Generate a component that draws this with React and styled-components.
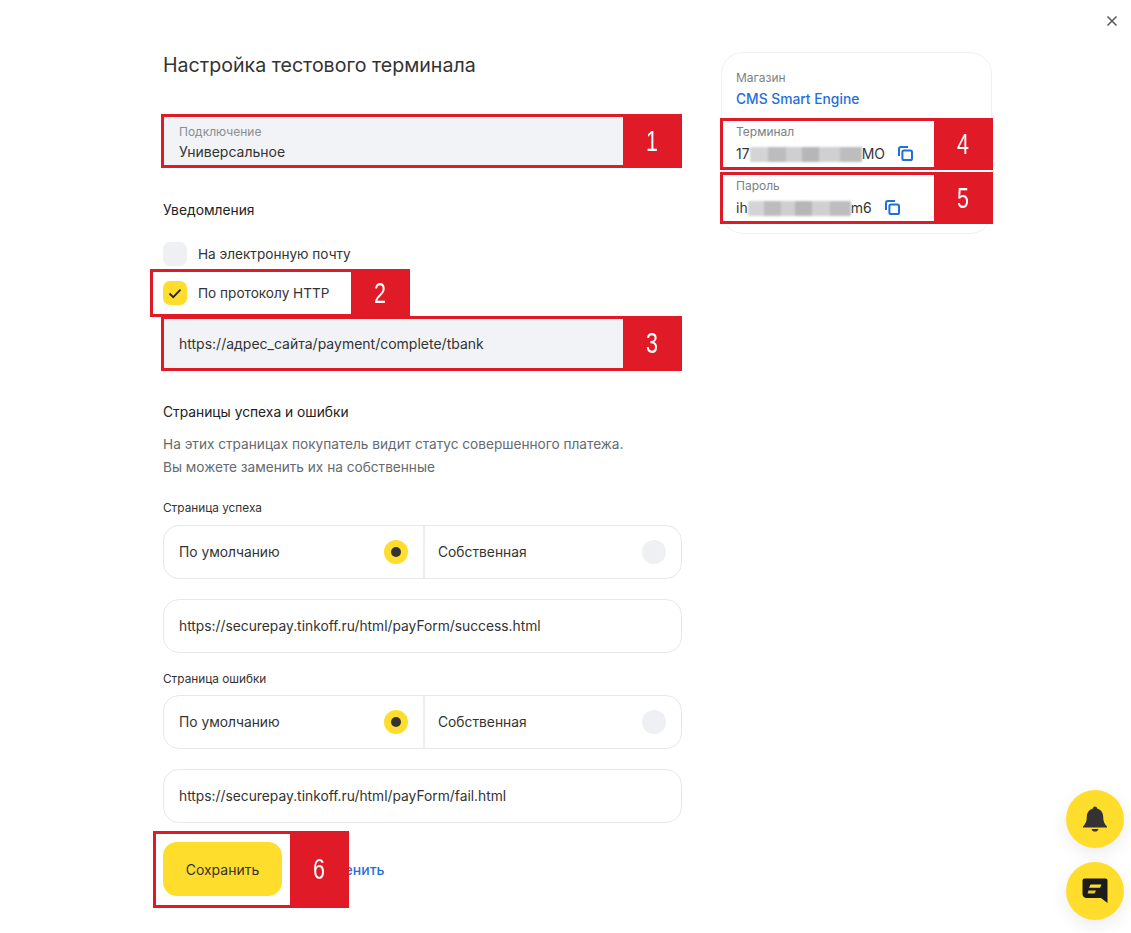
import React from "react"
import styled, { createGlobalStyle } from "styled-components"

const Global = createGlobalStyle`
  html, body {
    margin: 0;
    background: #fff;
  }
  * {
    box-sizing: border-box;
  }
`

const RED = "#e01a27"

const Page = styled.div`
  position: relative;
  width: 1131px;
  height: 933px;
  overflow: hidden;
  display: flex;
  gap: 39px;
  padding-left: 163px;
  font-family: Inter, "Liberation Sans", sans-serif;
  color: #333;
`

const Main = styled.main`
  width: 519px;
  padding-top: 51px;
  display: flex;
  flex-direction: column;
`

const Title = styled.h1`
  margin: 0 0 37px;
  font-size: 19.6px;
  line-height: 28px;
  font-weight: 400;
  color: #333;
`

const Heading = styled.h2`
  margin: ${props => props.$top}px 0 0;
  font-size: 13.8px;
  line-height: 20px;
  font-weight: 400;
  color: #222;
`

const Annotated = styled.div`
  position: relative;
`

/* red frames and numbered blocks lying over the screenshot */
const Frame = styled.div`
  position: absolute;
  top: ${props => props.$top ?? -2}px;
  bottom: ${props => props.$bottom ?? -2}px;
  left: ${props => props.$left ?? -2}px;
  right: ${props => props.$right ?? 0}px;
  border: 3px solid ${RED};
  pointer-events: none;
`

const Mark = styled.div`
  position: absolute;
  top: -3px;
  bottom: -3px;
  right: -3px;
  width: ${props => props.$width ?? 59}px;
  background: ${RED};
  color: #fff;
  display: flex;
  align-items: center;
  justify-content: center;
  font-family: "Liberation Sans", sans-serif;
  font-size: 29px;
`

const Digit = styled.span`
  display: inline-block;
  transform: scaleX(0.74);
`

const FilledField = styled.div`
  height: ${props => props.$height ?? 51}px;
  padding: 0 16px;
  background: #f1f3f6;
  border-radius: 4px;
  display: flex;
  flex-direction: column;
  justify-content: center;
`

const FieldLabel = styled.div`
  margin: 4px 0 2px;
  font-size: 12px;
  line-height: 16px;
  color: #8a8d92;
`

const FieldValue = styled.div`
  font-size: 14px;
  line-height: 20px;
  color: #333;
`

const Checks = styled.div`
  margin-top: 22px;
  display: flex;
  flex-direction: column;
  gap: 15px;
`

const CheckRow = styled.label`
  display: flex;
  align-items: center;
  gap: 11px;
  height: 24px;
  font-size: 13.6px;
  color: #333;
`

const Box = styled.span`
  width: 24px;
  height: 24px;
  border-radius: 7px;
  background: ${props => (props.$on ? "#ffdd2d" : "#eef0f3")};
  display: flex;
  align-items: center;
  justify-content: center;
`

const UrlBlock = styled(Annotated)`
  margin-top: 13px;
`

const Description = styled.p`
  margin: 11px 0 0;
  font-size: 13.65px;
  line-height: 23px;
  color: #666a70;
`

const SmallLabel = styled.div`
  margin-top: ${props => props.$top}px;
  margin-bottom: ${props => props.$bottom}px;
  font-size: 11.8px;
  line-height: 16px;
  color: #333;
`

const Segmented = styled.div`
  height: 54px;
  display: grid;
  grid-template-columns: 259px 1fr;
  border: 1px solid #e6e8eb;
  border-radius: 16px;
`

const Segment = styled.div`
  display: flex;
  align-items: center;
  justify-content: space-between;
  padding: 0 15px;
  font-size: 13.8px;
  color: #333;
  & + & {
    padding-left: 13px;
    border-left: 2px solid #eceef1;
  }
`

const Radio = styled.span`
  width: 24px;
  height: 24px;
  border-radius: 50%;
  background: ${props => (props.$on ? "#ffdd2d" : "#eef0f3")};
  display: flex;
  align-items: center;
  justify-content: center;
  &::after {
    content: "";
    display: ${props => (props.$on ? "block" : "none")};
    width: 10px;
    height: 10px;
    border-radius: 50%;
    background: #333;
  }
`

const UrlInput = styled.div`
  margin-top: 20px;
  height: 54px;
  padding: 0 15px;
  border: 1px solid #e6e8eb;
  border-radius: 16px;
  display: flex;
  align-items: center;
  font-size: 13.8px;
  color: #333;
`

const Actions = styled(Annotated)`
  margin-top: 19px;
  display: flex;
  align-items: center;
  gap: 34px;
`

const SaveButton = styled.button`
  width: 119px;
  height: 54px;
  border: 0;
  border-radius: 14px;
  background: #ffdd2d;
  font: inherit;
  font-size: 14px;
  color: #333;
`

const TextLink = styled.a`
  font-size: 14px;
  font-weight: 500;
  color: #1f6fdc;
`

const Side = styled.aside`
  width: 271px;
  height: 182px;
  margin-top: 52px;
  padding: 16px 15px 0 14px;
  border: 1px solid #eef0f3;
  border-radius: 22px;
`

const Info = styled(Annotated)`
  height: 54px;
`

const InfoLabel = styled.div`
  font-size: 12px;
  line-height: 18px;
  color: #7c7f85;
`

const InfoValue = styled.div`
  margin-top: 3px;
  display: flex;
  align-items: center;
  font-size: 14px;
  line-height: 20px;
  color: #333;
`

const ShopLink = styled.a`
  display: block;
  margin-top: 2px;
  font-size: 13.8px;
  line-height: 20px;
  font-weight: 500;
  color: #1f6fdc;
`

const Redacted = styled.span`
  display: inline-block;
  width: ${props => props.$width}px;
  height: 15px;
  background: linear-gradient(
    90deg,
    #d4d4d6 0 16%,
    #bcbcbe 16% 32%,
    #cfcfd1 32% 46%,
    #b6b6b8 46% 62%,
    #d0d0d2 62% 80%,
    #bdbdbf 80% 100%
  );
  filter: blur(1px);
`

const CopyButton = styled.span`
  display: flex;
  margin: -2px 0 0 13px;
  color: #1f6fdc;
`

const CloseButton = styled.button`
  position: absolute;
  top: 14px;
  right: 12px;
  width: 14px;
  height: 14px;
  padding: 0;
  border: 0;
  background: none;
  display: flex;
  color: #55585c;
`

const Floating = styled.div`
  position: absolute;
  right: 7px;
  bottom: 13px;
  display: flex;
  flex-direction: column;
  gap: 14px;
`

const Fab = styled.button`
  width: 58px;
  height: 58px;
  padding: 0;
  border: 0;
  border-radius: 50%;
  background: #ffdd2d;
  box-shadow: 0 6px 18px rgba(0, 0, 0, 0.08);
  display: flex;
  align-items: center;
  justify-content: center;
`

const CheckIcon = () => (
  <svg width="14" height="11" viewBox="0 0 14 11" fill="none">
    <path d="M1.5 5.5 5.2 9.2 12.5 1.6" stroke="#222" strokeWidth="1.8" />
  </svg>
)

const CopyIcon = () => (
  <svg width="15" height="15" viewBox="0 0 15 15" fill="none" stroke="currentColor" strokeWidth="2">
    <path d="M1 10V3a2 2 0 0 1 2-2h7" />
    <rect x="4.4" y="4.4" width="9.6" height="9.6" rx="1.6" />
  </svg>
)

const CloseIcon = () => (
  <svg width="14" height="14" viewBox="0 0 14 14" fill="none" stroke="currentColor" strokeWidth="1.5">
    <path d="M2.5 2.500l9 9M11.500 2.500l-9 9" />
  </svg>
)

const BellIcon = () => (
  <svg width="26" height="28" viewBox="0 0 26 28" fill="#333">
    <path d="M13 1.500c1.200 0 2 .8 2.100 1.900 3.900 1 6.100 4.300 6.100 8.300 0 4.300 1.100 6.900 3.800 9.800v1H1v-1c2.700-2.900 3.800-5.500 3.800-9.800 0-4 2.200-7.300 6.100-8.300.1-1.100.9-1.900 2.100-1.900z" />
    <path d="M9.500 24h7c-.4 1.600-1.800 2.600-3.500 2.600S9.900 25.600 9.500 24z" />
  </svg>
)

const ChatIcon = () => (
  <svg width="28" height="28" viewBox="0 0 28 28">
    <path d="M3.500 1.500h21a2 2 0 0 1 2 2v22.500l-6.500-5H6a4 4 0 0 1-4.500-4V3.500a2 2 0 0 1 2-2z" fill="#1c1c1c" />
    <path d="M9.500 7.500h11l-1.500 3.200H8z" fill="#ffdd2d" />
    <path d="M7.500 13.500h7.500l-1.400 3H6.500z" fill="#e6c63a" />
  </svg>
)

const Choice = () => (
  <Segmented>
    <Segment>
      По умолчанию
      <Radio $on />
    </Segment>
    <Segment>
      Собственная
      <Radio />
    </Segment>
  </Segmented>
)

const App = () => (
  <Page>
    <Global />
    <Main>
      <Title>Настройка тестового терминала</Title>

      <Annotated>
        <FilledField $height={50}>
          <FieldLabel>Подключение</FieldLabel>
          <FieldValue>Универсальное</FieldValue>
        </FilledField>
        <Frame>
          <Mark>
            <Digit>1</Digit>
          </Mark>
        </Frame>
      </Annotated>

      <Heading $top={34}>Уведомления</Heading>
      <Checks>
        <CheckRow>
          <Box />
          На электронную почту
        </CheckRow>
        <Annotated>
          <CheckRow>
            <Box $on>
              <CheckIcon />
            </Box>
            По протоколу HTTP
          </CheckRow>
          <Frame $top={-12} $bottom={-12} $left={-13} $right={272}>
            <Mark>
              <Digit>2</Digit>
            </Mark>
          </Frame>
        </Annotated>
      </Checks>

      <UrlBlock>
        <FilledField>
          <FieldValue>https://адрес_сайта/payment/complete/tbank</FieldValue>
        </FilledField>
        <Frame>
          <Mark>
            <Digit>3</Digit>
          </Mark>
        </Frame>
      </UrlBlock>

      <Heading $top={33}>Страницы успеха и ошибки</Heading>
      <Description>
        На этих страницах покупатель видит статус совершенного платежа.
        <br />
        Вы можете заменить их на собственные
      </Description>

      <SmallLabel $top={21} $bottom={9}>
        Страница успеха
      </SmallLabel>
      <Choice />
      <UrlInput>https://securepay.tinkoff.ru/html/payForm/success.html</UrlInput>

      <SmallLabel $top={18} $bottom={8}>
        Страница ошибки
      </SmallLabel>
      <Choice />
      <UrlInput>https://securepay.tinkoff.ru/html/payForm/fail.html</UrlInput>

      <Actions>
        <SaveButton>Сохранить</SaveButton>
        <TextLink>Отменить</TextLink>
        <Frame $top={-11} $bottom={-12} $left={-10} $right={333}>
          <Mark>
            <Digit>6</Digit>
          </Mark>
        </Frame>
      </Actions>
    </Main>

    <Side>
      <Info>
        <InfoLabel>Магазин</InfoLabel>
        <ShopLink>CMS Smart Engine</ShopLink>
      </Info>
      <Info>
        <InfoLabel>Терминал</InfoLabel>
        <InfoValue>
          17
          <Redacted $width={112} />
          MO
          <CopyButton>
            <CopyIcon />
          </CopyButton>
        </InfoValue>
        <Frame $top={-5} $bottom={7} $left={-16} $right={-17}>
          <Mark>
            <Digit>4</Digit>
          </Mark>
        </Frame>
      </Info>
      <Info>
        <InfoLabel>Пароль</InfoLabel>
        <InfoValue>
          ih
          <Redacted $width={103} />
          m6
          <CopyButton>
            <CopyIcon />
          </CopyButton>
        </InfoValue>
        <Frame $top={-5} $bottom={7} $left={-16} $right={-17}>
          <Mark>
            <Digit>5</Digit>
          </Mark>
        </Frame>
      </Info>
    </Side>

    <CloseButton aria-label="Закрыть">
      <CloseIcon />
    </CloseButton>

    <Floating>
      <Fab aria-label="Уведомления">
        <BellIcon />
      </Fab>
      <Fab aria-label="Чат">
        <ChatIcon />
      </Fab>
    </Floating>
  </Page>
)

export default App
